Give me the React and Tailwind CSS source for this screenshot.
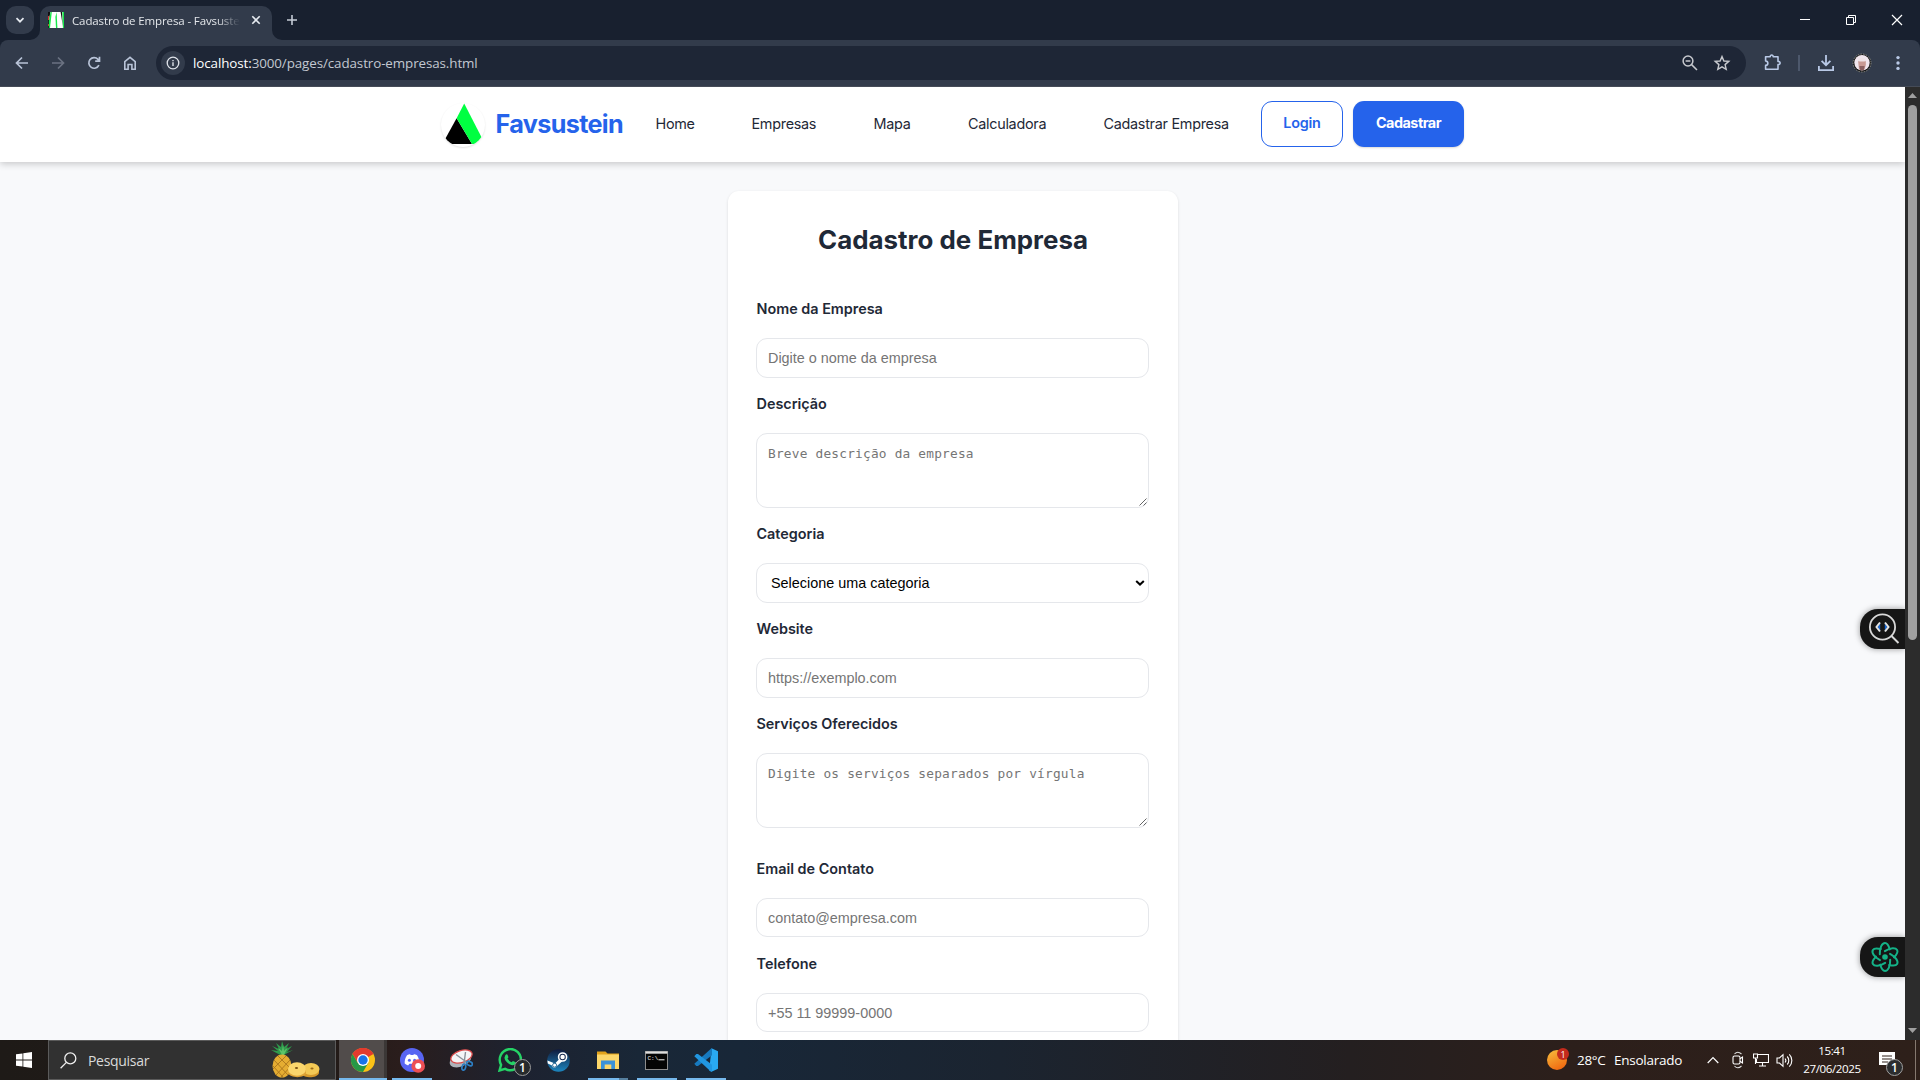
import React from "react";

const ui = "font-['Open_Sans','Noto_Sans',sans-serif]";

function Svg({ w = 20, h, vb, className = "", children }) {
  return (
    <svg width={w} height={h || w} viewBox={vb || `0 0 ${w} ${h || w}`} fill="none" className={`block shrink-0 ${className}`}>
      {children}
    </svg>
  );
}

function TabStrip() {
  return (
    <div className="flex h-10 items-end bg-[#18202f]">
      <div className="mb-1.5 ml-1.5 flex h-7 w-7 items-center justify-center rounded-[10px] bg-[#323b4b]">
        <Svg w={10}><path d="M1.5 3.2 5 6.7 8.5 3.2" stroke="#e6eaf0" strokeWidth="1.7" /></Svg>
      </div>
      <div className="relative ml-1.5 flex h-[34px] w-[232px] items-center rounded-t-[10px] bg-[#323b4b] pb-1.5 pl-2">
        <Svg w={10} className="absolute -left-[10px] bottom-0"><path d="M10 0V10H0A10 10 0 0 0 10 0Z" fill="#323b4b" /></Svg>
        <Svg w={10} className="absolute -right-[10px] bottom-0"><path d="M0 0V10H10A10 10 0 0 1 0 0Z" fill="#323b4b" /></Svg>
        <Svg w={16}>
          <rect width="16" height="16" fill="#fff" />
          <path d="M0 0H2.4L1 8V16H0Z" fill="#111" />
          <path d="M0 4H1V8H0ZM0 12H1V14H0Z" fill="#d33" />
          <path d="M2.6 0H3.8L2 16H0.8V9Z" fill="#16e84a" />
          <path d="M7.4 5 8.6 0 9.4 16H8Z" fill="#16e84a" />
          <path d="M12.6 0H14L14.8 14Z" fill="#111" />
          <path d="M14.4 0H16V16H14.9Z" fill="#16e84a" />
        </Svg>
        <div className={`${ui} ml-2 mt-px w-[168px] overflow-hidden whitespace-nowrap text-[11.5px] leading-4 tracking-[-0.12px] text-[#e3e6ea] [mask-image:linear-gradient(to_right,#000_145px,transparent_168px)]`}>
          Cadastro de Empresa - Favsuste
        </div>
        <Svg w={10} className="ml-[11px]"><path d="M1.3 1.3 8.7 8.7M8.7 1.3 1.3 8.7" stroke="#e6eaf0" strokeWidth="1.6" /></Svg>
      </div>
      <Svg w={12} className="mb-[14px] ml-[14px]"><path d="M6 1V11M1 6H11" stroke="#c5cbd6" strokeWidth="1.6" /></Svg>
      <div className="mb-[14px] ml-auto mr-[17px] flex items-center gap-[34px]">
        <Svg w={12}><path d="M1 5.5H11" stroke="#fff" /></Svg>
        <Svg w={12}><path d="M1.5 3.5H8.5V10.5H1.5ZM3.5 3.5V1.5H10.5V8.5H8.5" stroke="#fff" /></Svg>
        <Svg w={12}><path d="M1 1 11 11M11 1 1 11" stroke="#fff" strokeWidth="1.2" /></Svg>
      </div>
    </div>
  );
}

function Toolbar() {
  return (
    <div className="h-[47px] bg-[#18202f]">
      <div className="flex h-[47px] items-center rounded-t-[8px] border-b border-[#454b57] bg-[#323b4b] pl-[14px]">
        <Svg w={16}><path d="M14 8H3M8 2.5 2.5 8 8 13.5" stroke="#b9c4d8" strokeWidth="1.7" /></Svg>
        <Svg w={16} className="ml-5"><path d="M2 8H13M8 2.5 13.5 8 8 13.5" stroke="#6b7282" strokeWidth="1.7" /></Svg>
        <Svg w={16} className="ml-5"><path d="M12.9 10.2A5.3 5.3 0 1 1 12 4.3L13.2 5.6M13.5 1.8V6.1H9.2" stroke="#b9c4d8" strokeWidth="1.7" /></Svg>
        <Svg w={16} className="ml-5"><path d="M2.8 14.2V6.6L8 2.4 13.2 6.6V14.2H9.9V9.5H6.1V14.2Z" stroke="#b9c4d8" strokeWidth="1.6" /></Svg>
        <div className="ml-[18px] flex h-[34px] w-[1590px] items-center rounded-full bg-[#1e2636] pl-[5px] pr-[15px]">
          <div className="flex h-6 w-6 items-center justify-center rounded-full bg-[#323b4b]">
            <Svg w={14}>
              <circle cx="7" cy="7" r="5.8" stroke="#dfe3ea" strokeWidth="1.3" />
              <path d="M7 6.2V10M7 3.9V5.2" stroke="#dfe3ea" strokeWidth="1.4" />
            </Svg>
          </div>
          <div className={`${ui} ml-2 whitespace-nowrap text-[13.4px] leading-5 tracking-[-0.1px] text-[#c3c8d1]`}>
            <span className="text-white">localhost:</span>3000/pages/cadastro-empresas.html
          </div>
          <Svg w={18} className="ml-auto">
            <circle cx="7" cy="7" r="4.9" stroke="#c7c9ce" strokeWidth="1.5" />
            <path d="M10.6 10.6 16 16M4.6 7H9.4" stroke="#c7c9ce" strokeWidth="1.5" />
          </Svg>
          <Svg w={18} className="ml-[14px]">
            <path d="M9 2.6 10.9 7 15.8 7.4 12.1 10.6 13.2 15.3 9 12.8 4.8 15.3 5.9 10.6 2.2 7.4 7.1 7Z" stroke="#c7c9ce" strokeWidth="1.4" />
          </Svg>
        </div>
        <Svg w={20} className="ml-4">
          <path d="M3.6 3.8H8.2C8 1.4 11.4 1.4 11.2 3.8H16V8.4C18.8 8.2 18.8 11.8 16 11.6V16.3H3.6V12.4C6.6 12.2 6.6 8.2 3.6 8Z" stroke="#b9c9e6" strokeWidth="1.6" strokeLinejoin="round" />
        </Svg>
        <div className="ml-4 h-4 w-0.5 bg-[#4d586c]" />
        <Svg w={18} className="ml-[17px]">
          <path d="M9 1V11M4.6 6.8 9 11.2 13.4 6.8M1.9 12V16.1H16.1V12" stroke="#b9c9e6" strokeWidth="1.8" />
        </Svg>
        <Svg w={20} className="ml-[17px]">
          <circle cx="10" cy="10" r="9" fill="#111" stroke="#8a8a80" strokeDasharray="1.5 1.2" />
          <circle cx="10" cy="9.8" r="7.7" fill="#f1e6ee" />
          <path d="M6.2 9C6.2 6 13.8 6 13.8 9V12L12.5 16.5 10 17.3 7 16.5Z" fill="#c99a94" />
          <path d="M6.2 7.4C7 4 13 4 13.8 7.4L12.5 8.4H7.5Z" fill="#efe3e6" />
          <path d="M7.4 13H12.6L12 16.8 10 17.4 8 16.8Z" fill="#8a5f60" />
        </Svg>
        <Svg w={4} h={16} className="ml-6">
          <circle cx="2" cy="2.6" r="1.7" fill="#b9c9e6" /><circle cx="2" cy="8" r="1.7" fill="#b9c9e6" /><circle cx="2" cy="13.4" r="1.7" fill="#b9c9e6" />
        </Svg>
      </div>
    </div>
  );
}

function SiteHeader() {
  const link = "shrink-0 whitespace-nowrap";
  return (
    <header className="relative z-10 flex h-[75px] shrink-0 items-center bg-white pb-px pl-[441px] shadow-[0_2px_7px_rgba(0,0,0,0.2)]">
      <div className="mt-px h-11 w-11 shrink-0 overflow-hidden rounded-full shadow-[0_1px_2px_rgba(0,0,0,0.12)]">
        <Svg w={44}>
          <path d="M15.6 15.3 31 41H1.4Z" fill="#000" />
          <path d="M23.2 0.4 44 41H31L15.6 15.3Z" fill="#00ff41" />
        </Svg>
      </div>
      <div className="ml-[10.5px] w-[124px] shrink-0 whitespace-nowrap text-[25.2px] font-bold leading-8 tracking-[-0.65px] text-[#2563eb]">Favsustein</div>
      <nav className="ml-[36px] flex shrink-0 items-center text-[14.4px] leading-6 tracking-[-0.28px] text-[#1f2937]">
        <a className={`${link} w-[96px]`}>Home</a>
        <a className={`${link} w-[122px]`}>Empresas</a>
        <a className={`${link} w-[94.5px]`}>Mapa</a>
        <a className={`${link} w-[135.5px]`}>Calculadora</a>
        <a className={`${link} w-[157.5px]`}>Cadastrar Empresa</a>
      </nav>
      <button className="h-[46px] w-[82px] shrink-0 rounded-[11px] border border-[#2563eb] pb-0.5 text-[14.4px] font-semibold tracking-[-0.2px] text-[#2563eb]">Login</button>
      <button className="ml-[10px] h-[46px] w-[111px] shrink-0 rounded-[11px] bg-[#2563eb] pb-0.5 text-[14.4px] font-bold tracking-[-0.5px] text-white shadow-[0_1px_2px_rgba(0,0,0,0.15)]">Cadastrar</button>
    </header>
  );
}

const fields = [
  { label: "Nome da Empresa", kind: "input", text: "Digite o nome da empresa" },
  { label: "Descrição", kind: "area", text: "Breve descrição da empresa" },
  { label: "Categoria", kind: "select", text: "Selecione uma categoria" },
  { label: "Website", kind: "input", text: "https://exemplo.com" },
  { label: "Serviços Oferecidos", kind: "area", text: "Digite os serviços separados por vírgula", gap: true },
  { label: "Email de Contato", kind: "input", text: "contato@empresa.com", short: true },
  { label: "Telefone", kind: "input", text: "+55 11 99999-0000", short: true },
];

function Field({ label, kind, text, gap, short }) {
  return (
    <div className={gap ? "mb-[29px]" : short ? "mb-[15px]" : "mb-[14px]"}>
      <div className="mb-[17px] pl-[0.5px] text-[14.4px] font-semibold leading-6 text-[#1f2937]">{label}</div>
      {kind === "area" ? (
        <div className="relative h-[75px] rounded-[11px] border border-[#e5e7eb] px-[11px] pt-[10px] font-['DejaVu_Sans_Mono',monospace] text-[12.8px] leading-5 tracking-[0.21px] text-[#757575]">
          {text}
          <Svg w={8} className="absolute bottom-px right-[1px]"><path d="M0.5 7.5 7.5 0.5M4.5 7.5 7.5 4.5" stroke="#555" strokeWidth="0.9" /></Svg>
        </div>
      ) : (
        <div className={`flex items-center rounded-[11px] border border-[#e5e7eb] font-['Liberation_Sans',Arial,sans-serif] text-[14.4px] leading-5 ${short ? "h-[39px]" : "h-10"} ${kind === "select" ? "pl-[14px] pr-[3px] text-black" : "pl-[11px] text-[#757575]"}`}>
          {text}
          {kind === "select" && (
            <Svg w={10} className="ml-auto"><path d="M1.2 3 5 6.6 8.8 3" stroke="#000" strokeWidth="2" /></Svg>
          )}
        </div>
      )}
    </div>
  );
}

function Page() {
  return (
    <div className="relative flex w-[1905px] flex-col overflow-hidden bg-[#f8f9fb] font-['Inter',sans-serif]">
      <SiteHeader />
      <main className="ml-[728px] mt-[29px] h-[1100px] w-[450px] shrink-0 rounded-[11px] bg-white px-7 shadow-[0_1px_3px_rgba(0,0,0,0.12)]">
        <h1 className="pb-[39px] pt-[31px] text-center text-[25.92px] font-bold leading-9 text-[#1f2937]">Cadastro de Empresa</h1>
        <div className="w-[393px]">
          {fields.map((f) => <Field key={f.label} {...f} />)}
        </div>
      </main>
      <div className="absolute right-0 top-[522px] flex h-10 w-[45px] items-center rounded-l-[18px] bg-[#161616] pl-2 shadow-[0_0_6px_rgba(0,0,0,0.4)]">
        <Svg w={32}>
          <circle cx="14.5" cy="14" r="12.6" stroke="#d9d9d9" strokeWidth="1.8" />
          <path d="M23.5 23 30.5 30" stroke="#d9d9d9" strokeWidth="2" />
          <path d="M12.2 10.5V17.5L9.8 14ZM16.8 10.5V17.5L19.2 14Z" fill="#1769d8" />
          <path d="M12 9.5 8.5 14 12 18.5M17 9.5 20.5 14 17 18.5" stroke="#e6e6e6" strokeWidth="2" />
        </Svg>
      </div>
      <div className="absolute right-0 top-[850px] flex h-10 w-[45px] items-center rounded-l-[18px] bg-[#161616] pl-[10px] shadow-[0_0_6px_rgba(0,0,0,0.4)]">
        <Svg w={30}>
          <circle cx="15" cy="15" r="2.8" fill="#14b287" />
          {[0, 60, 120, 180, 240, 300].map((a) => (
            <path key={a} d="M9.8 12.2C9.6 5.5 12 1 15 1C17.2 1 18.8 3.8 19.8 7.4" stroke="#14b287" strokeWidth="2" strokeLinecap="round" transform={`rotate(${a} 15 15)`} />
          ))}
        </Svg>
      </div>
    </div>
  );
}

function Scrollbar() {
  return (
    <div className="flex w-[15px] flex-col items-center bg-[#2c2c2c]">
      <Svg w={9} h={5} className="mt-[6px]"><path d="M4.5 0 9 5H0Z" fill="#9f9f9f" /></Svg>
      <div className="mt-[7px] h-[535px] w-[9px] rounded-full bg-[#9f9f9f]" />
      <Svg w={9} h={5} className="mb-[7px] mt-auto"><path d="M4.5 5 9 0H0Z" fill="#9f9f9f" /></Svg>
    </div>
  );
}

function Pineapple() {
  return (
    <Svg w={50} h={38}>
      <path d="M12 15 1 9 8 10 2 5 9 8 6 2 11 6 12 0 14 6 19 2 16 8 22 5 17 11 23 9Z" fill="#2f9a4c" />
      <path d="M12 14 8 7 12 10 13 4 14 10 18 6 14 14Z" fill="#5cc468" />
      <ellipse cx="12" cy="25" rx="9.5" ry="11.5" fill="#e5ad32" />
      <path d="M4 19 18 34M8 15 21 28M3 25 13 36M20 19 6 34M16 15 3 28M21 25 11 36" stroke="#a9751c" strokeWidth="0.9" />
      <path d="M32 28V33C34 38 48 37 49 32V28Z" fill="#d6992b" />
      <ellipse cx="41" cy="28" rx="8.5" ry="6" fill="#f3c955" />
      <ellipse cx="42" cy="27.5" rx="1.6" ry="1" fill="#9a6a18" />
      <path d="M18 27V32C20 37.5 35 37.5 36 32V27Z" fill="#dfa436" />
      <ellipse cx="27" cy="28" rx="9" ry="6.8" fill="#fbd66c" />
      <ellipse cx="26.5" cy="27" rx="1.6" ry="1" fill="#7b5212" />
    </Svg>
  );
}

function ChromeIcon() {
  return (
    <Svg w={24}>
      <circle cx="12" cy="12" r="12" fill="#fbc116" />
      <path d="M12 12 1.6 6A12 12 0 0 1 22.4 6Z" fill="#e33b2e" />
      <path d="M12 6H22.4A12 12 0 0 0 1.6 6L6.8 15Z" fill="#e33b2e" />
      <path d="M1.6 6A12 12 0 0 0 12 24L17.2 15 12 12 6.8 15Z" fill="#279847" />
      <circle cx="12" cy="12" r="6" fill="#fff" />
      <circle cx="12" cy="12" r="4.7" fill="#1a73e8" />
    </Svg>
  );
}

function DiscordIcon() {
  return (
    <Svg w={25} h={25}>
      <circle cx="12" cy="12" r="12" fill="#5865f2" />
      <path d="M7 7.2C8.3 6.5 9.5 6.2 10.2 6.2L10.6 7H13.4L13.8 6.2C14.6 6.2 15.8 6.5 17 7.2C18.8 10 19.5 12.8 19.3 15.5C18 16.6 16.5 17.2 15.6 17.3L14.7 15.8H9.3L8.4 17.3C7.4 17.2 6 16.6 4.7 15.5C4.5 12.6 5.2 9.9 7 7.2Z" fill="#fff" />
      <circle cx="9.4" cy="12.2" r="1.5" fill="#5865f2" /><circle cx="14.6" cy="12.2" r="1.5" fill="#5865f2" />
      <circle cx="18.2" cy="18" r="6.8" fill="#ed4f55" /><circle cx="18.2" cy="18" r="3" fill="#fff" />
    </Svg>
  );
}

function SnipIcon() {
  return (
    <Svg w={24} h={22}>
      <ellipse cx="11.5" cy="11" rx="11.3" ry="6.5" fill="#aeb3ba" transform="rotate(-22 11.5 11)" />
      <ellipse cx="12.5" cy="7.5" rx="11" ry="6" fill="#f4f5f7" stroke="#d94a4a" strokeWidth="1.3" transform="rotate(-18 12.5 7.5)" />
      <path d="M7 5.5 18 13.5M16.5 3 15 15" stroke="#8a9199" strokeWidth="1.4" />
      <ellipse cx="20.5" cy="14.5" rx="3" ry="2" stroke="#2d7fc4" strokeWidth="1.7" transform="rotate(25 20.5 14.5)" />
      <ellipse cx="14.8" cy="18.2" rx="1.8" ry="3" stroke="#2d7fc4" strokeWidth="1.7" transform="rotate(15 14.8 18.2)" />
    </Svg>
  );
}

function WhatsAppIcon() {
  return (
    <div className={`relative ${ui}`}>
      <Svg w={24}>
        <path d="M1.5 22.5 3.1 16.8A10.6 10.6 0 1 1 7.2 20.9Z" stroke="#25d366" strokeWidth="2.4" />
        <path d="M7.2 7.4C8.2 5.9 9.3 6.1 9.6 6.9L10.4 8.9C10.5 9.6 9.7 10.2 9.5 10.6C10.5 12.5 12 13.6 13.7 14.3L14.9 12.9L17.8 14.3C17.8 16.5 16 17.4 14.5 17.3C10.5 16.6 6.4 12.6 6.5 9.4Z" fill="#25d366" />
      </Svg>
      <div className="absolute -right-[9px] top-[11px] flex h-[17px] w-[17px] items-center justify-center rounded-full border border-[#9a9a9a] bg-[#262a2c] text-[12px] font-semibold leading-3 text-white">1</div>
    </div>
  );
}

function SteamIcon() {
  return (
    <Svg w={23} className="mr-px">
      <defs><linearGradient id="steam" x1="0" y1="0" x2="0" y2="1"><stop stopColor="#101a3c" /><stop offset="1" stopColor="#1c86bf" /></linearGradient></defs>
      <circle cx="11.5" cy="11.5" r="11.3" fill="url(#steam)" />
      <path d="M0.4 11.5 8 14.4 14.8 7.6 17 10.8 9.4 17.5C8.4 19.4 5.5 19 5 16.5L0.8 14.6Z" fill="#fff" />
      <circle cx="15.6" cy="8" r="4" fill="#172a50" stroke="#fff" strokeWidth="1.6" />
      <circle cx="15.6" cy="8" r="2.2" fill="#fff" />
      <circle cx="7.6" cy="16.2" r="2" stroke="#19608f" strokeWidth="0.9" />
    </Svg>
  );
}

function FolderIcon() {
  return (
    <Svg w={22} h={19}>
      <path d="M0 0.5H8.5L10.5 2.5H22V18H0Z" fill="#e2a31b" />
      <path d="M0 3.5H22V18H0Z" fill="#fcd76a" />
      <path d="M4 18V9.5H18V18H14.3V13.4H7.7V18Z" fill="#3a92d9" />
    </Svg>
  );
}

function CmdIcon() {
  return (
    <Svg w={23} h={19} className="mr-px">
      <rect width="23" height="19" fill="#8d8d8d" />
      <rect x="1" y="2.6" width="21" height="15.4" fill="#050505" />
      <rect x="0.5" y="0.5" width="22" height="2" fill="#dedede" />
      <text x="2.5" y="9" fontSize="6" fill="#f2f2f2" fontFamily="Liberation Mono, monospace">C:\</text>
      <path d="M13.5 8.8H19.5" stroke="#f2f2f2" />
    </Svg>
  );
}

function CodeIcon() {
  return (
    <Svg w={24}>
      <path d="M17.5 0.3 24 3.2V20.8L17.5 23.7 15.2 22.6Z" fill="#29a9f2" />
      <path d="M17.5 0.3 0.3 15.8 2.2 17.9 4 17.9 18 7.2V0.6Z" fill="#1779be" />
      <path d="M0.3 8.2 2.4 6.1 4 6.1 18 16.8V23.4L16.8 23.5Z" fill="#2196e0" />
    </Svg>
  );
}

function TaskButton({ children, active, running, tail }) {
  return (
    <div className={`relative flex h-10 w-12 shrink-0 items-center justify-center ${active ? "bg-[#514c4b]" : ""}`}>
      {children}
      {active && <div className="absolute inset-y-0 right-0 w-[3px] bg-[#3b3736]" />}
      {running && <div className={`absolute bottom-0 h-0.5 bg-[#76b9ed] ${active ? "left-0 w-12" : "left-1 w-10"}`} />}
      {tail && <div className="absolute bottom-0 right-1 h-0.5 w-[9px] bg-[#56809f]" />}
    </div>
  );
}

function Taskbar() {
  return (
    <div className={`flex h-10 items-center bg-[linear-gradient(90deg,#1e1a17_0px,#231b18_340px,#2a1d1c_400px,#1d2230_520px,#192737_640px,#182738_740px,#1b2430_1000px,#241f20_1350px,#2c1f1b_1560px,#2e201a_1920px)] ${ui} text-white`}>
      <div className="flex w-12 justify-center">
        <Svg w={16}><path d="M0 2.3 6.5 1.4V7.6H0ZM7.3 1.3 16 0V7.6H7.3ZM0 8.4H6.5V14.6L0 13.7ZM7.3 8.4H16V16L7.3 14.7Z" fill="#fff" /></Svg>
      </div>
      <div className="flex h-10 w-72 items-center border border-[#5b5b5b] bg-[#313131] pl-[11px]">
        <Svg w={17}><circle cx="10.3" cy="6.4" r="5.5" stroke="#f0f0f0" strokeWidth="1.3" /><path d="M6.4 10.4 0.6 16.2" stroke="#f0f0f0" strokeWidth="1.3" /></Svg>
        <span className="ml-[11px] mt-px text-[14px] leading-5 tracking-[-0.3px] text-[#dadada]">Pesquisar</span>
        <div className="ml-auto mr-[15px]"><Pineapple /></div>
      </div>
      <div className="ml-[3px] flex items-center gap-[1px]">
        <TaskButton active running><ChromeIcon /></TaskButton>
        <TaskButton running><DiscordIcon /></TaskButton>
        <TaskButton><SnipIcon /></TaskButton>
        <TaskButton><WhatsAppIcon /></TaskButton>
        <TaskButton><SteamIcon /></TaskButton>
        <TaskButton running tail><FolderIcon /></TaskButton>
        <TaskButton running><CmdIcon /></TaskButton>
        <TaskButton running><CodeIcon /></TaskButton>
      </div>
      <div className="ml-auto flex h-10 items-center">
        <div className="relative">
          <Svg w={22} h={24}>
            <defs><linearGradient id="sun" x1="0.2" y1="0" x2="0.7" y2="1"><stop stopColor="#f7b83a" /><stop offset="1" stopColor="#f0660f" /></linearGradient></defs>
            <circle cx="10" cy="12" r="10" fill="url(#sun)" />
          </Svg>
          <div className="absolute top-0 left-[10px] flex h-3 w-3 items-center justify-center rounded-full bg-[#c42b1c] text-[9px] leading-none text-white">1</div>
        </div>
        <div className="ml-2 w-[37px] whitespace-nowrap text-[13.5px] leading-5 tracking-[-0.3px]">28°C</div>
        <div className="w-[93px] whitespace-nowrap text-[13.5px] leading-5 tracking-[-0.25px]">Ensolarado</div>
        <Svg w={12}><path d="M0.7 9 6 3.5 11.3 9" stroke="#fff" strokeWidth="1.2" /></Svg>
        <Svg w={14} h={18} className="ml-[12px]">
          <path d="M3.5 3C5.5 0.8 8 0.8 10.5 3M3.5 15C5.5 17.2 8 17.2 10.5 15" stroke="#ddd" strokeWidth="1.1" />
          <rect x="2" y="5" width="7" height="8" rx="1.5" stroke="#fff" strokeWidth="1.1" />
          <path d="M9 7.8 11.5 6V12L9 10.2" stroke="#fff" strokeWidth="1.1" />
        </Svg>
        <Svg w={16} h={14} className="ml-[8px]">
          <path d="M5 1.5H15.5V9.5H3.5V6M9.5 9.5V13M6 13H13M0.5 1H4.5V5H0.5ZM2.5 5V11" stroke="#fff" strokeWidth="1.1" />
        </Svg>
        <Svg w={17} h={15} className="ml-[7px]">
          <path d="M1 5H3.5L7 1.7V13.3L3.5 10H1Z" stroke="#fff" strokeWidth="1.1" />
          <path d="M9 5.5C10 6.6 10 8.4 9 9.5M11.2 3.5C13.3 5.7 13.3 9.3 11.2 11.5M13.3 1.4C16.7 4.8 16.7 10.2 13.3 13.6" stroke="#fff" strokeWidth="1.1" />
        </Svg>
        <div className="ml-[8px] w-[62px] whitespace-nowrap text-center text-[11.6px] leading-[18px] tracking-[-0.4px]">
          <div>15:41</div>
          <div>27/06/2025</div>
        </div>
        <div className="relative ml-4 mr-[14px] mt-1 h-[20px] w-[19px]">
          <Svg w={16} h={15}>
            <path d="M0 0H16V13H12L9 15V13H0Z" fill="#fff" /><path d="M3 4H13M3 7H13M3 10H9" stroke="#2e201a" strokeWidth="1.1" />
          </Svg>
          <div className="absolute left-[7px] top-[7px] flex h-[17px] w-[17px] items-center justify-center rounded-full border border-[#a0a0a0] bg-[#2b2d2f] text-[12px] font-semibold leading-3">1</div>
        </div>
        <div className="ml-[3px] mr-1 h-10 w-px bg-[#85786f]" />
      </div>
    </div>
  );
}

export default function App() {
  return (
    <div className="flex h-[1080px] w-[1920px] flex-col overflow-hidden">
      <TabStrip />
      <Toolbar />
      <div className="flex h-[953px]">
        <Page />
        <Scrollbar />
      </div>
      <Taskbar />
    </div>
  );
}
